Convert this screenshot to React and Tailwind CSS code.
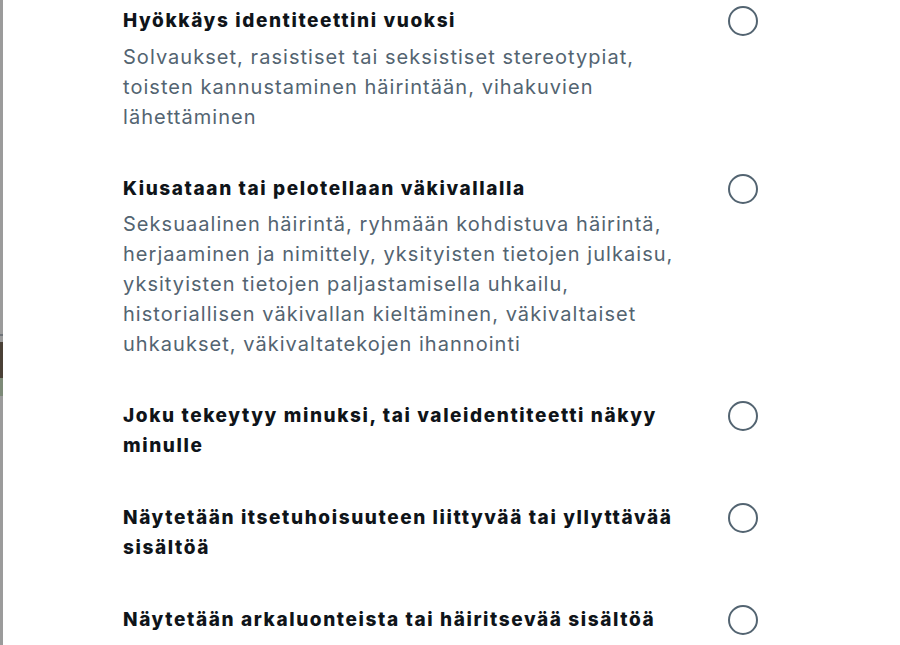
import React from "react";

const items = [
  {
    title: "Hyökkäys identiteettini vuoksi",
    desc: "Solvaukset, rasistiset tai seksistiset stereotypiat, toisten kannustaminen häirintään, vihakuvien lähettäminen",
  },
  {
    title: "Kiusataan tai pelotellaan väkivallalla",
    desc: "Seksuaalinen häirintä, ryhmään kohdistuva häirintä, herjaaminen ja nimittely, yksityisten tietojen julkaisu, yksityisten tietojen paljastamisella uhkailu, historiallisen väkivallan kieltäminen, väkivaltaiset uhkaukset, väkivaltatekojen ihannointi",
  },
  { title: "Joku tekeytyy minuksi, tai valeidentiteetti näkyy minulle" },
  { title: "Näytetään itsetuhoisuuteen liittyvää tai yllyttävää sisältöä" },
  { title: "Näytetään arkaluonteista tai häiritsevää sisältöä" },
];

export default function App() {
  return (
    <div
      className="flex h-[645px] w-[900px] overflow-hidden bg-white"
      style={{ fontFamily: "Inter, 'Noto Sans', sans-serif" }}
    >
      <div className="flex w-[3px] shrink-0 flex-col bg-[#9b9b9b]">
        <div className="h-[334px]" />
        <div className="h-[2px] bg-[#6f7479]" />
        <div className="h-[6px]" />
        <div className="h-[36px] bg-[#4a4036]" />
        <div className="h-[18px] bg-[#7d8a78]" />
      </div>
      <div className="flex flex-1 flex-col gap-[42px] pl-[120px] pt-[6px]">
        {items.map((it, i) => (
          <div key={i} className="flex items-start">
            <div className="w-[567px]">
              <div className="text-[19px] font-extrabold leading-[30px] tracking-[1.6px] text-[#0f1419]">
                {it.title}
              </div>
              {it.desc && (
                <div
                  className={`${i === 0 ? "mt-[6px]" : "mt-[5px]"} text-[20px] leading-[30px] tracking-[1.04px] text-[#536471]`}
                >
                  {it.desc}
                </div>
              )}
            </div>
            <div className="ml-[38px] h-[30px] w-[30px] shrink-0 rounded-full border-[2.5px] border-[#536471]" />
          </div>
        ))}
      </div>
    </div>
  );
}
